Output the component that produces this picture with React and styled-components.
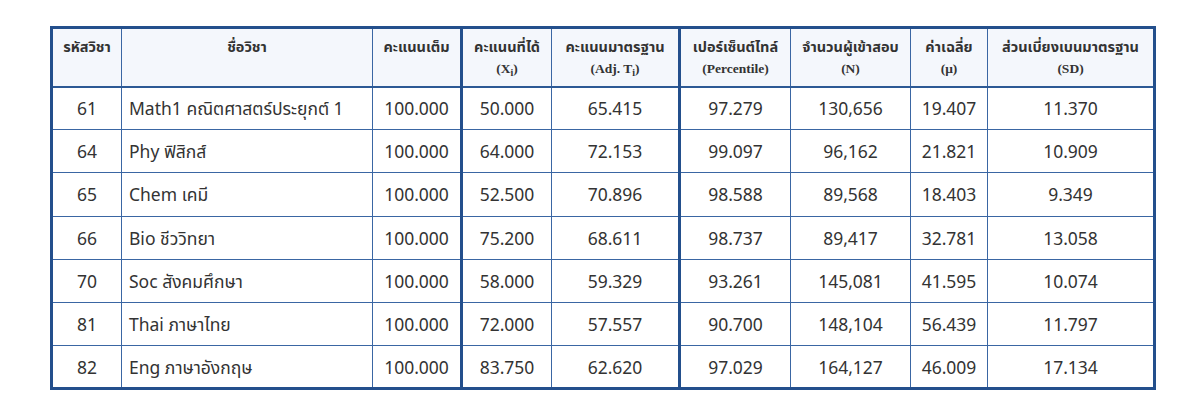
import React from 'react';
import styled, { createGlobalStyle } from 'styled-components';

const GlobalStyle = createGlobalStyle`
  html, body {
    margin: 0;
    padding: 0;
    background: #ffffff;
  }
  body {
    font-family: "Noto Sans", "Noto Sans Thai", "Noto Sans CJK SC", sans-serif;
    color: #333333;
  }
`;

const Page = styled.div`
  width: 1200px;
  height: 411px;
  overflow: hidden;
  padding: 26px 0 0 50px;
  box-sizing: border-box;
`;

const Table = styled.table`
  border-collapse: collapse;
  table-layout: fixed;
  width: 1103px;
  border: 3px solid #234f8c;
`;

const HeadCell = styled.th`
  background: #f4f7fc;
  border: 1.5px solid #3a66a3;
  border-right-width: ${p => (p.$thick ? '3px' : '1.5px')};
  border-right-color: ${p => (p.$thick ? '#234f8c' : '#3a66a3')};
  border-bottom: 2px solid #2c5995;
  height: 59px;
  padding: 6px 2px 0;
  box-sizing: border-box;
  vertical-align: top;
  text-align: center;
  font-size: 14.5px;
  font-weight: 700;
  line-height: 22px;
  color: #333;
  white-space: nowrap;
`;

const Sub = styled.div`
  font-family: "Liberation Serif", "Times New Roman", serif;
  font-size: 13.5px;
  font-weight: 700;
  line-height: 24px;

  sub {
    font-size: 10px;
    vertical-align: -3px;
    line-height: 0;
  }
`;

const Cell = styled.td`
  border: 1.5px solid #3a66a3;
  border-right-width: ${p => (p.$thick ? '3px' : '1.5px')};
  border-right-color: ${p => (p.$thick ? '#234f8c' : '#3a66a3')};
  height: 43.2px;
  padding: 0 7px;
  box-sizing: border-box;
  text-align: ${p => (p.$left ? 'left' : 'center')};
  font-size: 17.5px;
  line-height: 24px;
  color: #333;
  white-space: nowrap;
`;

const columns = [
  { w: 70, title: 'รหัสวิชา' },
  { w: 251, title: 'ชื่อวิชา', left: true },
  { w: 89, title: 'คะแนนเต็ม', thick: true },
  { w: 90, title: 'คะแนนที่ได้', sub: <>(X<sub>i</sub>)</> },
  { w: 128, title: 'คะแนนมาตรฐาน', sub: <>(Adj. T<sub>i</sub>)</>, thick: true },
  { w: 111, title: 'เปอร์เซ็นต์ไทล์', sub: '(Percentile)' },
  { w: 120, title: 'จำนวนผู้เข้าสอบ', sub: '(N)' },
  { w: 77, title: 'ค่าเฉลี่ย', sub: '(μ)' },
  { w: 167, title: 'ส่วนเบี่ยงเบนมาตรฐาน', sub: '(SD)' },
];

const rows = [
  ['61', 'Math1 คณิตศาสตร์ประยุกต์ 1', '100.000', '50.000', '65.415', '97.279', '130,656', '19.407', '11.370'],
  ['64', 'Phy ฟิสิกส์', '100.000', '64.000', '72.153', '99.097', '96,162', '21.821', '10.909'],
  ['65', 'Chem เคมี', '100.000', '52.500', '70.896', '98.588', '89,568', '18.403', '9.349'],
  ['66', 'Bio ชีววิทยา', '100.000', '75.200', '68.611', '98.737', '89,417', '32.781', '13.058'],
  ['70', 'Soc สังคมศึกษา', '100.000', '58.000', '59.329', '93.261', '145,081', '41.595', '10.074'],
  ['81', 'Thai ภาษาไทย', '100.000', '72.000', '57.557', '90.700', '148,104', '56.439', '11.797'],
  ['82', 'Eng ภาษาอังกฤษ', '100.000', '83.750', '62.620', '97.029', '164,127', '46.009', '17.134'],
];

export default function App() {
  return (
    <>
      <GlobalStyle />
      <Page>
        <Table>
          <colgroup>
            {columns.map((c, i) => (
              <col key={i} style={{ width: c.w }} />
            ))}
          </colgroup>
          <thead>
            <tr>
              {columns.map((c, i) => (
                <HeadCell key={i} $thick={c.thick}>
                  {c.title}
                  {c.sub && <Sub>{c.sub}</Sub>}
                </HeadCell>
              ))}
            </tr>
          </thead>
          <tbody>
            {rows.map((r, ri) => (
              <tr key={ri}>
                {r.map((v, ci) => (
                  <Cell key={ci} $left={columns[ci].left} $thick={columns[ci].thick}>
                    {v}
                  </Cell>
                ))}
              </tr>
            ))}
          </tbody>
        </Table>
      </Page>
    </>
  );
}
